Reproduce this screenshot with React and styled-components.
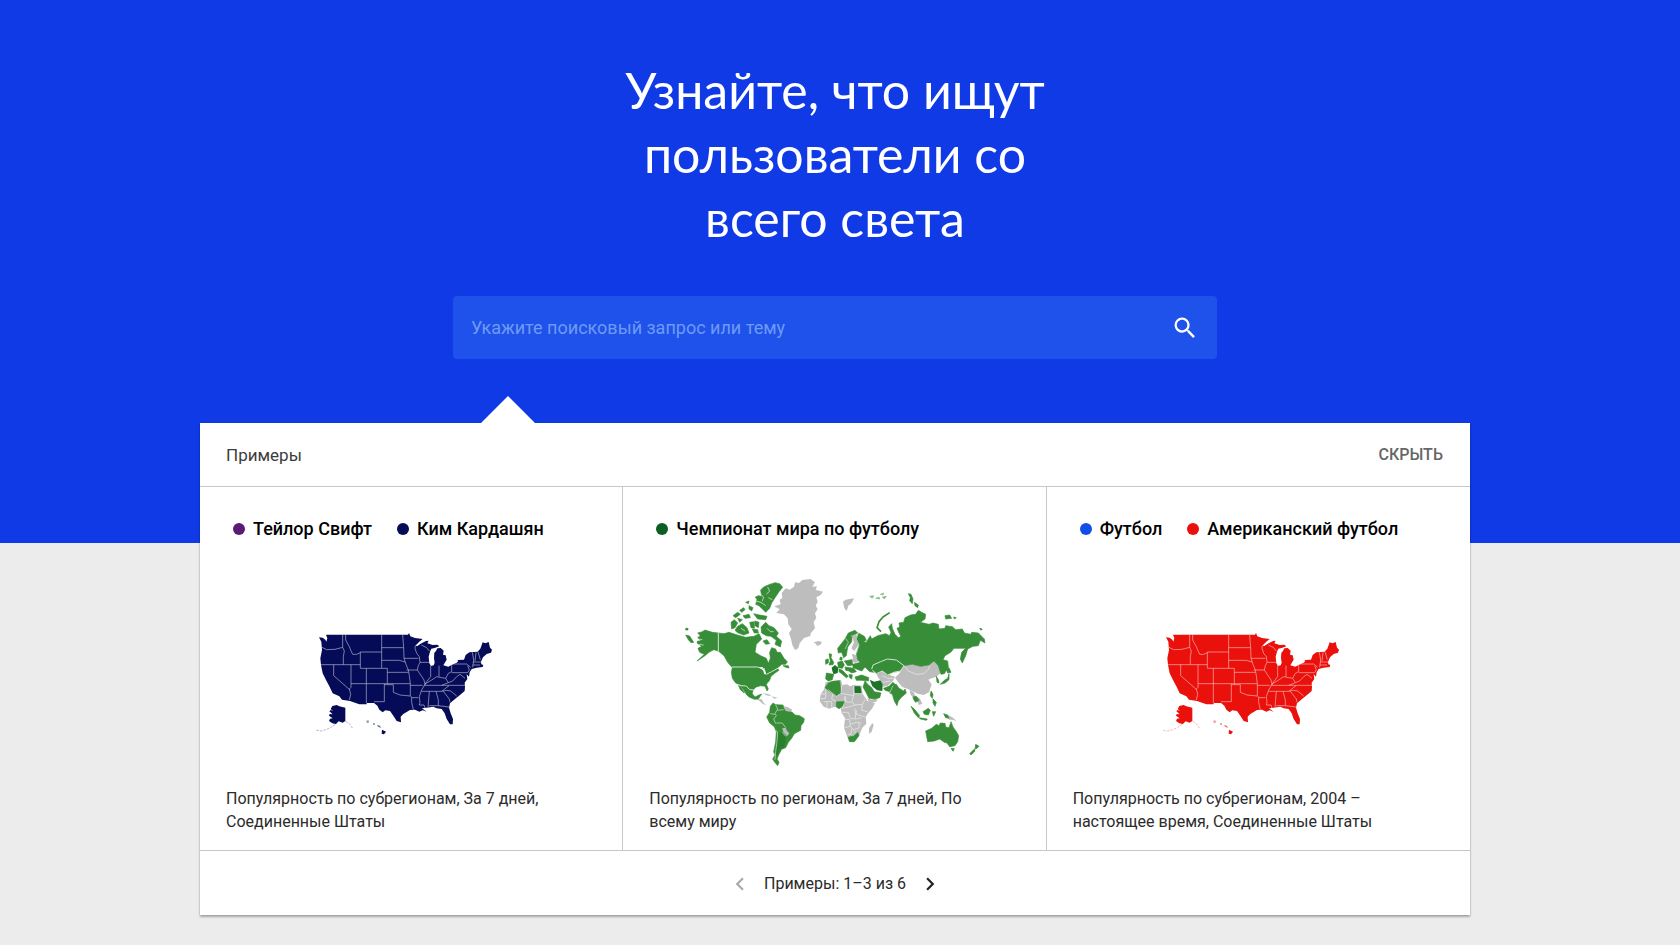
import React from 'react'
import styled, { createGlobalStyle } from 'styled-components'
import { MdSearch, MdChevronLeft, MdChevronRight } from 'react-icons/md'

const examples = [
  {
    terms: [
      { label: 'Тейлор Свифт', color: '#5c1a76' },
      { label: 'Ким Кардашян', color: '#060b57' },
    ],
    map: <UsaMap fill="#060b57" />,
    caption: 'Популярность по субрегионам, За 7 дней, Соединенные Штаты',
  },
  {
    terms: [{ label: 'Чемпионат мира по футболу', color: '#0a5f22' }],
    map: <WorldMap />,
    caption: 'Популярность по регионам, За 7 дней, По всему миру',
  },
  {
    terms: [
      { label: 'Футбол', color: '#104ee6' },
      { label: 'Американский футбол', color: '#ea100c' },
    ],
    map: <UsaMap fill="#ea100c" />,
    caption: 'Популярность по субрегионам, 2004 – настоящее время, Соединенные Штаты',
  },
]

function App() {
  return (
    <Page>
      <GlobalStyle />
      <Hero>
        <Title>Узнайте, что ищут пользователи со всего света</Title>
        <SearchForm role="search" onSubmit={(e) => e.preventDefault()}>
          <SearchInput type="text" aria-label="Поиск" placeholder="Укажите поисковый запрос или тему" />
          <IconButton type="submit" aria-label="Найти">
            <MdSearch size={28} />
          </IconButton>
        </SearchForm>
      </Hero>

      <Main>
        <Panel>
          <PanelHeader>
            <PanelTitle>Примеры</PanelTitle>
            <HideButton type="button">СКРЫТЬ</HideButton>
          </PanelHeader>

          <Columns>
            {examples.map((item) => (
              <Example key={item.caption}>
                <Legend>
                  {item.terms.map((term) => (
                    <Term key={term.label}>
                      <Dot $color={term.color} />
                      {term.label}
                    </Term>
                  ))}
                </Legend>
                <MapArea>{item.map}</MapArea>
                <Caption>{item.caption}</Caption>
              </Example>
            ))}
          </Columns>

          <Pager>
            <IconButton type="button" aria-label="Назад" $color="#a9a9a9">
              <MdChevronLeft size={26} />
            </IconButton>
            <PagerText>Примеры: 1–3 из 6</PagerText>
            <IconButton type="button" aria-label="Вперед" $color="#222">
              <MdChevronRight size={26} />
            </IconButton>
          </Pager>
        </Panel>
      </Main>
    </Page>
  )
}

function UsaMap({ fill }) {
  return (
    <svg width="222" height="210" viewBox="0 -150 666 630" aria-hidden="true">
      <g fill={fill}>
        <path d="M78 59H324L327 54L331 64L345 69L368 72L358 80L346 92L352 93L362 86L378 78L386 77L382 85L398 90L412 89L418 94L404 99L394 101L390 110L386 125L388 145L393 153L401 151L404 143L402 130L403 113L408 108L412 100L422 99L431 107L429 119L437 121L440 134L434 144L430 151L445 155L456 149L470 143L475 138L472 135L492 134L497 120L508 112L533 110L541 101L548 82L556 85L566 81L570 98L576 104L573 113L560 117L549 127L543 140L544 148L550 150L548 156L530 158L515 162L509 172L507 185L500 178L502 192L494 203L495 215L494 228L480 240L465 252L450 265L447 278L452 295L459 312L458 328L450 328L440 312L434 295L425 282L410 280L400 275L380 278L366 280L380 290L368 286L358 290L345 284L330 285L310 297L302 305L303 322L290 318L282 305L270 288L256 286L248 292L238 284L232 272L222 264H200V268L178 268L150 258L126 254L118 244L98 235L88 214L78 195L68 175L63 150L61 130L66 105L64 80L57 67L68 68L76 74L79 80L82 70Z" />
        <path d="M92 282L97 273L110 270L118 274L136 278V318L128 323L116 319L108 327L97 325L87 318L90 311L98 310L87 302L89 297L98 298L88 289L92 285L99 288Z" />
        <path d="M246 344L258 350L252 358L245 356Z" />
        <path d="M231 330L240 332L243 339L234 335Z" opacity="0.6" />
        <circle cx="203" cy="320" r="4" opacity="0.4" />
        <circle cx="222" cy="327" r="3" opacity="0.5" />
      </g>
      <g fill="none" stroke={fill} strokeWidth="3" strokeDasharray="7 4" opacity="0.3">
        <path d="M106 328L92 337L78 344L62 348L46 345" />
        <path d="M137 319L148 326L158 340" />
      </g>
      <g fill="none" stroke="#fff" strokeWidth="2" strokeLinejoin="round" opacity="0.7">
        <path d="M66 97L80 104L105 103L128 97M128 60V97L133 108L130 125V149M63 149H181" />
        <path d="M137 60V75L148 95L152 105L158 118L170 118L181 113M181 111H245V160H181ZM245 60V111M245 98H311" />
        <path d="M245 136H298L315 141M245 160H262V206M262 172H326M199 160V264M153 149V206M153 206H331" />
        <path d="M101 149V182L149 224M153 206V217L148 222L152 238L148 255M253 206V260H222" />
        <path d="M253 209H280V232L300 240L331 243M308 60L311 98L312 130L318 148L325 165L328 182L331 206V242L335 247V262L340 284" />
        <path d="M312 130H355M320 165H352M331 211H368M335 248H355M346 92L345 100L350 115L358 125L360 142L355 152L352 165L362 180L372 195L375 208L365 225L358 245L360 262L358 270H372L375 280" />
        <path d="M360 142H388M364 90L380 98L388 108M392 152V185L380 200L373 211M417 152V185M375 207L395 195L410 185L425 188L437 190L445 175L455 170V150" />
        <path d="M455 173H503L508 165L503 152M458 147H500L512 157M437 190L445 203L458 198L470 185L480 178L495 190M373 211H495M425 211L445 203M365 229H425L447 212" />
        <path d="M388 229L384 277M408 229L415 255V272M388 272H415L447 276M430 229L448 252L450 262M425 229L440 226L452 228L470 243" />
        <path d="M517 112L521 135L518 157M528 112L525 138M534 110L541 134M519 141H543M518 150H540" />
      </g>
    </svg>
  )
}

function WorldMap() {
  return (
    <svg width="330" height="210" viewBox="0 0 990 630" aria-hidden="true">
      {/* countries without data */}
      <g fill="#bdbdbd">
        <path d="M316 124L335 118L332 105L340 98L338 84L350 70L362 74L375 65L378 52L390 54L400 45L425 42L438 52L430 65L444 64L440 74L462 80L455 90L442 97L446 110L440 122L446 132L438 145L442 158L434 172L438 190L425 205L424 213L405 219L392 235L388 250L378 255L370 240L366 222L360 205L368 192L358 178L356 160L345 148L322 144L332 133Z" />
        <path d="M434 232L448 228L458 230L456 238L445 243L440 236Z" />
        <path d="M522 110L530 104L542 102L555 100L548 114L538 122L533 138L526 130Z" />
        <path d="M262 402L278 403L284 414L292 419L282 418L272 408ZM280 384L300 388L308 394L292 391ZM308 394L326 398L316 401Z" />
      </g>
      {/* the Americas */}
      <g fill="#388e38" stroke="#388e38" strokeWidth="2" strokeLinejoin="round">
        <path d="M86 204L100 200L108 195L130 202L148 204L165 206L180 202L205 210L230 217L255 214L270 206L278 222L262 238L258 262L275 272L292 280L298 295L304 280L302 262L308 248L320 252L324 262L334 262L345 280L355 290L350 298L338 298L325 310L330 316L318 324L306 334L302 346L292 358L298 372L294 378L288 364L275 362L262 366L252 374L250 386L258 396L270 390L278 387L268 402L256 403L240 396L232 388L222 372L213 360L200 354L190 340L187 322L190 308L176 292L165 272L148 258L134 254L120 262L108 272L84 288L106 268L92 262L87 250L98 244L84 234L86 228L96 228L86 218L94 212Z" />
        <path d="M208 360L216 366L226 384L214 374Z" />
        <path d="M50 210L62 213L74 232L66 233L58 224ZM50 190H57V195H50Z" />
        <path d="M275 75L284 66L300 59L318 53L332 56L341 67L330 80L318 98L308 114L302 130L290 142L280 132L270 122L260 118L264 104L259 96L268 92L278 94Z" />
        <path d="M276 186L290 172L300 182L315 188L328 204L322 214L338 228L334 246L318 238L322 226L306 214L292 212L278 204Z" />
        <path d="M206 184L220 176L234 188L240 204L224 210L206 203L198 196ZM186 172L196 164L206 174L198 188L188 192Z" />
        <path d="M192 152L206 142L214 148L200 158ZM212 136L224 128L228 134L218 142ZM222 152L240 148L244 158L228 160ZM240 122L252 128L248 138L240 132ZM254 146L272 150L294 154L290 164L266 162ZM242 172L256 170L256 190L246 188ZM258 168L270 172L268 188L258 182ZM230 112L240 108L238 116ZM250 192L266 194L268 204L256 204ZM282 228L294 224L302 236L290 238ZM206 160L220 164L212 172Z" />
        <path d="M342 302L358 302L360 309L350 307Z" />
        <path d="M304 424L312 414L320 419L342 420L346 432L370 442L378 450L392 452L406 461L404 472L396 482L395 496L376 506L368 520L358 532L350 548L338 553L330 568L324 582L330 592L326 602L316 590L311 582L318 570L314 560L320 530L322 500L316 485L302 474L293 456L302 442Z" />
      </g>
      <path fill="#bdbdbd" d="M344 424L356 426L370 434L364 440L350 438ZM340 490L350 488L354 497L361 505L354 514L343 502Z" />
      <path fill="#2a802e" d="M327 504L340 502L350 514L350 530L345 548L333 552L325 572L319 565Z" />
      <path fill="#fff" d="M268 307L280 306L288 315L292 328L286 328L282 316Z" />
      {/* inlets between the arctic islands */}
      <g fill="none" stroke="#fff" strokeWidth="3" strokeLinejoin="round">
        <path d="M270 84L284 96L280 108M296 66L302 78L292 88M260 108L276 112L290 122M310 104L298 98M216 190L228 198M294 190L304 200L314 200M90 238L104 240M86 222L100 224" opacity="0.6" />
      </g>
      <g fill="none" stroke="#cfe6cf" strokeWidth="3" strokeLinejoin="round">
        <path d="M148 204V259M189 306H265L288 312M292 328L308 320L330 308M204 358L218 362L232 363L242 374L252 374" />
        <path d="M320 420L326 432L318 446L322 452L314 462L320 476M304 446L318 448M326 436L344 434M322 474L340 474L350 488M322 496L326 504L324 530L320 560L318 584M340 502L350 514" strokeWidth="2" />
      </g>

      <g transform="translate(450 0)">
        <g fill="#bdbdbd">
          <path d="M20 352L40 348L66 345L70 360L85 358L92 364L104 360L128 362L130 385L145 408L168 414L160 430L146 446L140 456L142 476L130 488L122 508L105 530L90 530L82 508L75 488L78 460L68 444L65 430L48 425L30 431L14 425L2 408L5 388L16 372Z" />
          <path d="M150 490L160 474L164 480L158 500L150 506Z" />
          <path d="M102 204L112 206L118 240L106 258L97 250L104 232L98 216Z" />
          <path d="M98 266L110 270L122 288L108 294L98 288L102 278Z" />
          <path d="M170 322L190 320L205 328L228 335L222 348L206 362L192 366L186 348L178 338Z" />
          <path d="M228 338L242 324L255 302L280 298L305 304L330 300L345 288L360 302L368 322L352 335L338 340L328 344L338 358L330 382L314 390L296 386L284 380L272 374L250 366L238 352Z" />
          <path d="M272 374L284 382L290 394L302 400L310 416L300 420L292 402L282 398L274 388Z" />
          <path d="M144 400L158 404L176 400L172 410L152 414ZM388 450L402 458L412 468L400 464L390 464Z" />
        </g>
        <g fill="#388e38" stroke="#388e38" strokeWidth="2" strokeLinejoin="round">
          <path d="M112 266L120 240L112 222L118 204L136 214L142 226L132 230L142 232L154 212L158 222L176 212L200 206L212 212L216 202L209 186L218 176L220 190L228 208L238 218L246 214L240 204L234 190L242 186L240 174L254 172L258 158L275 150L290 148L298 136L308 142L320 148L318 162L304 172L330 178L342 174L358 178L360 192L378 190L380 182L400 185L410 194L430 192L436 204L455 208L458 202L478 204L496 222L498 234L484 226L478 242L462 244L446 252L440 272L430 294L424 282L428 262L440 250L405 250L395 262L378 272L372 284L386 288L388 306L376 326L366 328L358 302L345 288L330 300L305 304L280 298L255 302L232 285L205 282L185 290L165 298L158 310L166 322L152 320L140 308L128 296L116 284Z" />
          <path d="M160 300L185 290L205 282L232 285L255 302L244 318L224 322L206 330L190 318L172 326L160 314Z" />
          <path d="M56 250L64 240L78 222L88 204L108 196L116 204L100 210L98 230L86 246L82 272L74 278L68 262L58 264Z" />
          <path d="M20 284L28 282L28 294L20 298ZM30 266L38 268L36 278L44 292L42 299L30 300L34 288Z" />
          <path d="M22 324L44 328L40 344L28 348L20 342ZM56 292L70 288L76 300L70 310L58 308ZM64 276L70 278L68 286L62 284Z" />
          <path d="M76 288L98 284L102 300L86 302ZM102 298L124 292L140 304L128 318L112 312L102 308ZM78 306L104 310L112 320L98 324L90 318L80 316ZM90 328L100 330L98 342L92 338Z" />
          <path d="M60 312L70 316L88 334L82 338L68 326L60 320Z" />
          <path d="M108 336L128 330L150 338L148 348L128 346L112 346Z" />
          <path d="M138 348L146 358L158 368L166 380L186 384L182 398L166 402L150 400L142 384L132 366Z" />
          <path d="M194 370L210 364L222 352L230 360L220 374L212 380L198 376Z" />
          <path d="M222 362L232 358L240 370L254 378L258 372L262 384L248 396L238 408L234 422L226 408L220 388L212 384Z" />
          <path d="M26 374L18 368L28 354L42 349L62 347L66 384L52 393L40 384ZM52 410L78 410L72 422L60 431L52 426ZM88 516L104 514L116 502L120 512L106 530L92 530Z" />
          <path d="M282 396L292 394L300 406L290 412L284 404Z" />
          <path d="M276 424L286 432L302 452L298 458L286 444ZM300 458L325 462L322 466L304 462ZM312 440L328 430L334 436L328 450L316 448ZM340 440L350 440L344 454ZM374 446L386 450L390 460L380 458ZM336 378L342 388L340 400L334 392ZM342 402L352 412L348 424L342 414Z" />
          <path d="M352 334L358 344L360 354L354 352ZM382 312L390 308L396 322L386 324ZM390 326L390 344L378 354L364 358L376 346L386 340Z" />
          <path d="M320 498L338 490L352 478L360 482L364 474L378 475L380 486L390 488L396 470L402 486L412 500L419 512L416 530L408 542L392 545L384 534L376 532L362 522L346 528L326 530Z" />
          <path d="M396 550L406 551L402 559ZM470 538L480 544L474 550L468 552ZM466 552L468 558L456 570L452 566Z" />
          <path d="M268 86L276 88L282 102L280 116L272 108L274 98ZM286 112L298 120L296 128L288 122ZM378 152L392 150L398 160L380 162ZM404 156L412 158L406 162ZM482 190L490 192L486 196Z" />
          <path d="M152 94L164 92L160 100ZM170 100L180 96L182 102ZM184 88L194 84L192 90ZM190 96L202 94L196 102Z" opacity="0.6" />
        </g>
        <path fill="none" stroke="#388e38" strokeWidth="5" strokeLinejoin="round" d="M186 200L174 188L180 170L192 156L212 143" />
        <g fill="#1d7326">
          <path d="M38 308L48 300L58 308L56 324L44 328L40 318Z" />
          <path d="M152 344L166 350L184 346L191 358L190 378L174 376L160 364Z" />
          <path d="M106 364L124 364L128 385H107Z" />
        </g>
        <g fill="none" stroke="#fff" strokeWidth="2" strokeLinejoin="round" opacity="0.75">
          <path d="M28 374L42 386L52 394L66 385L68 360M2 388L20 386M20 372V400L4 402M42 386L38 402L52 410M66 385L104 392V362M104 386H130M76 394L78 410L70 428M80 394V410M104 392L98 410L108 420L130 418L138 404M78 410L98 412M14 410H38V428M24 410V428M70 430L90 426L108 420M70 442H88L94 460L110 462L108 430M130 418L128 436L146 440M112 436L112 448L138 456M76 462L92 464L94 484L76 488M94 478L112 472L128 474M112 462L128 458M94 484L104 494L118 490M86 508L96 508L98 490M104 496L112 504M120 474V490" />
          <path d="M160 316L172 326L190 318L206 330L224 322L244 318L255 302L232 285L205 282L185 290L162 300L158 312" strokeWidth="3" />
          <path d="M256 303L268 318L292 328L314 326L328 314L332 302M190 332L206 340L224 340M192 352L214 348M118 204L112 222L120 240L112 266M98 210L104 232L96 250M80 220L88 232L78 252M222 362L212 384M150 338L152 346" />
        </g>
      </g>
    </svg>
  )
}

export default App

const GlobalStyle = createGlobalStyle`
  * {
    box-sizing: border-box;
  }

  body {
    margin: 0;
    background: #ececec;
    font-family: Roboto, 'Noto Sans', sans-serif;
  }
`

const Page = styled.div`
  min-height: 100vh;
  padding-bottom: 30px;
`

const Hero = styled.header`
  display: flex;
  flex-direction: column;
  align-items: center;
  padding: 58px 26px 184px 16px;
  background: #0f3ae6;
`

const Title = styled.h1`
  max-width: 460px;
  margin: 0 0 46px;
  font-family: Lato, 'Open Sans', sans-serif;
  font-size: 50px;
  font-weight: 400;
  line-height: 64px;
  color: #fff;
  text-align: center;
`

const SearchForm = styled.form`
  display: flex;
  align-items: center;
  width: 100%;
  max-width: 764px;
  height: 63px;
  padding: 0 18px;
  border-radius: 4px;
  background: #1e52eb;
`

const SearchInput = styled.input`
  flex: 1;
  min-width: 0;
  padding: 0;
  border: 0;
  outline: 0;
  background: transparent;
  font-family: inherit;
  font-size: 18px;
  line-height: 24px;
  color: #fff;

  &::placeholder {
    color: #6f9af5;
    opacity: 1;
  }
`

const IconButton = styled.button`
  display: flex;
  padding: 0;
  border: 0;
  background: transparent;
  color: ${({ $color }) => $color || '#fff'};
  cursor: pointer;
`

const Main = styled.main`
  padding: 0 26px 0 16px;
`

const Panel = styled.section`
  position: relative;
  max-width: 1270px;
  margin: -120px auto 0;
  background: #fff;
  box-shadow: 0 2px 2px rgba(0, 0, 0, 0.28), 0 0 2px rgba(0, 0, 0, 0.14);

  &::before {
    content: '';
    position: absolute;
    bottom: 100%;
    left: 281px;
    border: 27px solid transparent;
    border-top: 0;
    border-bottom-color: #fff;
  }
`

const PanelHeader = styled.div`
  display: flex;
  align-items: center;
  justify-content: space-between;
  height: 63px;
  padding: 0 27px 0 26px;
`

const PanelTitle = styled.h2`
  margin: 0;
  font-size: 17px;
  font-weight: 400;
  line-height: 24px;
  color: #3c3c3c;
`

const HideButton = styled.button`
  padding: 0;
  border: 0;
  background: transparent;
  font-family: inherit;
  font-size: 16px;
  font-weight: 500;
  line-height: 24px;
  color: #666;
  cursor: pointer;
`

const Columns = styled.div`
  display: grid;
  grid-template-columns: repeat(3, 1fr);
  border-top: 1px solid #c8c8c8;
  border-bottom: 1px solid #c8c8c8;
`

const Example = styled.article`
  padding: 30px 26px 17px;

  &:not(:last-child) {
    border-right: 1px solid #c8c8c8;
  }
`

const Legend = styled.div`
  display: flex;
  flex-wrap: wrap;
  gap: 25px;
  padding-left: 7px;
`

const Term = styled.span`
  display: flex;
  align-items: center;
  gap: 8px;
  font-size: 18px;
  font-weight: 500;
  line-height: 24px;
  color: #000;
`

const Dot = styled.span`
  width: 12px;
  height: 12px;
  border-radius: 50%;
  background: ${({ $color }) => $color};
`

const MapArea = styled.div`
  display: flex;
  justify-content: center;
  padding: 24px 0 12px;

  svg {
    max-width: 100%;
  }
`

const Caption = styled.p`
  max-width: 320px;
  margin: 0;
  font-size: 16px;
  line-height: 23px;
  color: #2b2b2b;
`

const Pager = styled.div`
  display: flex;
  align-items: center;
  justify-content: center;
  gap: 11px;
  height: 64px;
  padding-top: 2px;
`

const PagerText = styled.span`
  font-size: 16px;
  line-height: 24px;
  color: #2b2b2b;
`
